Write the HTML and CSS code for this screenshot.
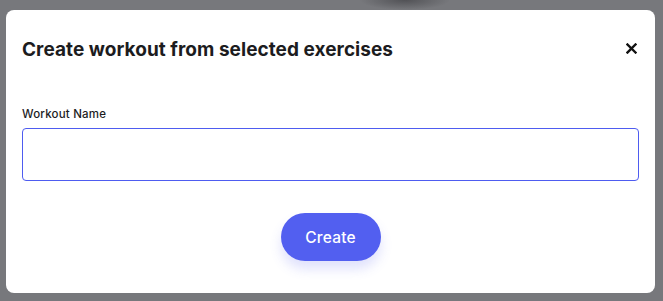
FILE: index.html
```html
<!DOCTYPE html>
<html>
<head>
<meta charset="utf-8">
<link rel="stylesheet" href="styles.css">
</head>
<body>
<div class="backdrop">
  <div class="modal">
    <div class="modal-header">
      <h2 class="modal-title">Create workout from selected exercises</h2>
      <button class="close-btn" aria-label="Close">
        <svg width="11" height="11" viewBox="0 0 11 11"><path d="M1.5 1.5 L9.5 9.5 M9.5 1.5 L1.5 9.5" stroke="#111" stroke-width="2.4" stroke-linecap="square"/></svg>
      </button>
    </div>
    <label class="field-label" for="wname">Workout Name</label>
    <input class="field-input" id="wname" type="text">
    <div class="actions">
      <button class="create-btn">Create</button>
    </div>
  </div>
</div>
</body>
</html>
```
FILE: styles.css
```css
html, body {
  margin: 0;
  padding: 0;
}
body {
  width: 663px;
  height: 301px;
  overflow: hidden;
  background: #77787c;
  font-family: "Inter", "Lato", sans-serif;
}
.backdrop {
  width: 663px;
  height: 301px;
  padding: 10px 8px 8px 6px;
  box-sizing: border-box;
  background:
    radial-gradient(ellipse 45px 10px at 405px 0px, rgba(50,50,54,0.55), rgba(50,50,54,0) 100%),
    #77787c;
}
.modal {
  width: 649px;
  height: 283px;
  box-sizing: border-box;
  background: #ffffff;
  border-radius: 8px;
  padding: 28px 16px 0 16px;
  display: flex;
  flex-direction: column;
}
.modal-header {
  display: flex;
  justify-content: space-between;
  align-items: center;
  height: 24px;
}
.modal-title {
  margin: 0;
  font-family: "Inter", sans-serif;
  font-weight: 700;
  font-size: 19px;
  line-height: 24px;
  color: #1c1c1e;
  letter-spacing: 0.05px;
}
.close-btn {
  border: 0;
  background: none;
  padding: 0;
  margin-right: 2px;
  margin-top: -3px;
  width: 11px;
  height: 11px;
  display: flex;
}
.field-label {
  margin-top: 45px;
  font-size: 11.5px;
  line-height: 14px;
  color: #1c1c1e;
  font-family: "Inter", sans-serif;
  font-weight: 500;
  letter-spacing: 0.2px;
}
.field-input {
  margin-top: 7px;
  height: 53px;
  box-sizing: border-box;
  border: 1px solid #4e5cf0;
  border-radius: 4px;
  outline: none;
  width: 100%;
}
.actions {
  display: flex;
  justify-content: center;
  margin-top: 32px;
}
.create-btn {
  width: 100px;
  height: 48px;
  border: 0;
  border-radius: 24px;
  background: #525ff0;
  color: #ffffff;
  font-family: "Inter", sans-serif;
  font-size: 15.5px;
  font-weight: 500;
  letter-spacing: 0.2px;
  box-shadow: 0 8px 12px rgba(82, 95, 240, 0.18);
}
```
